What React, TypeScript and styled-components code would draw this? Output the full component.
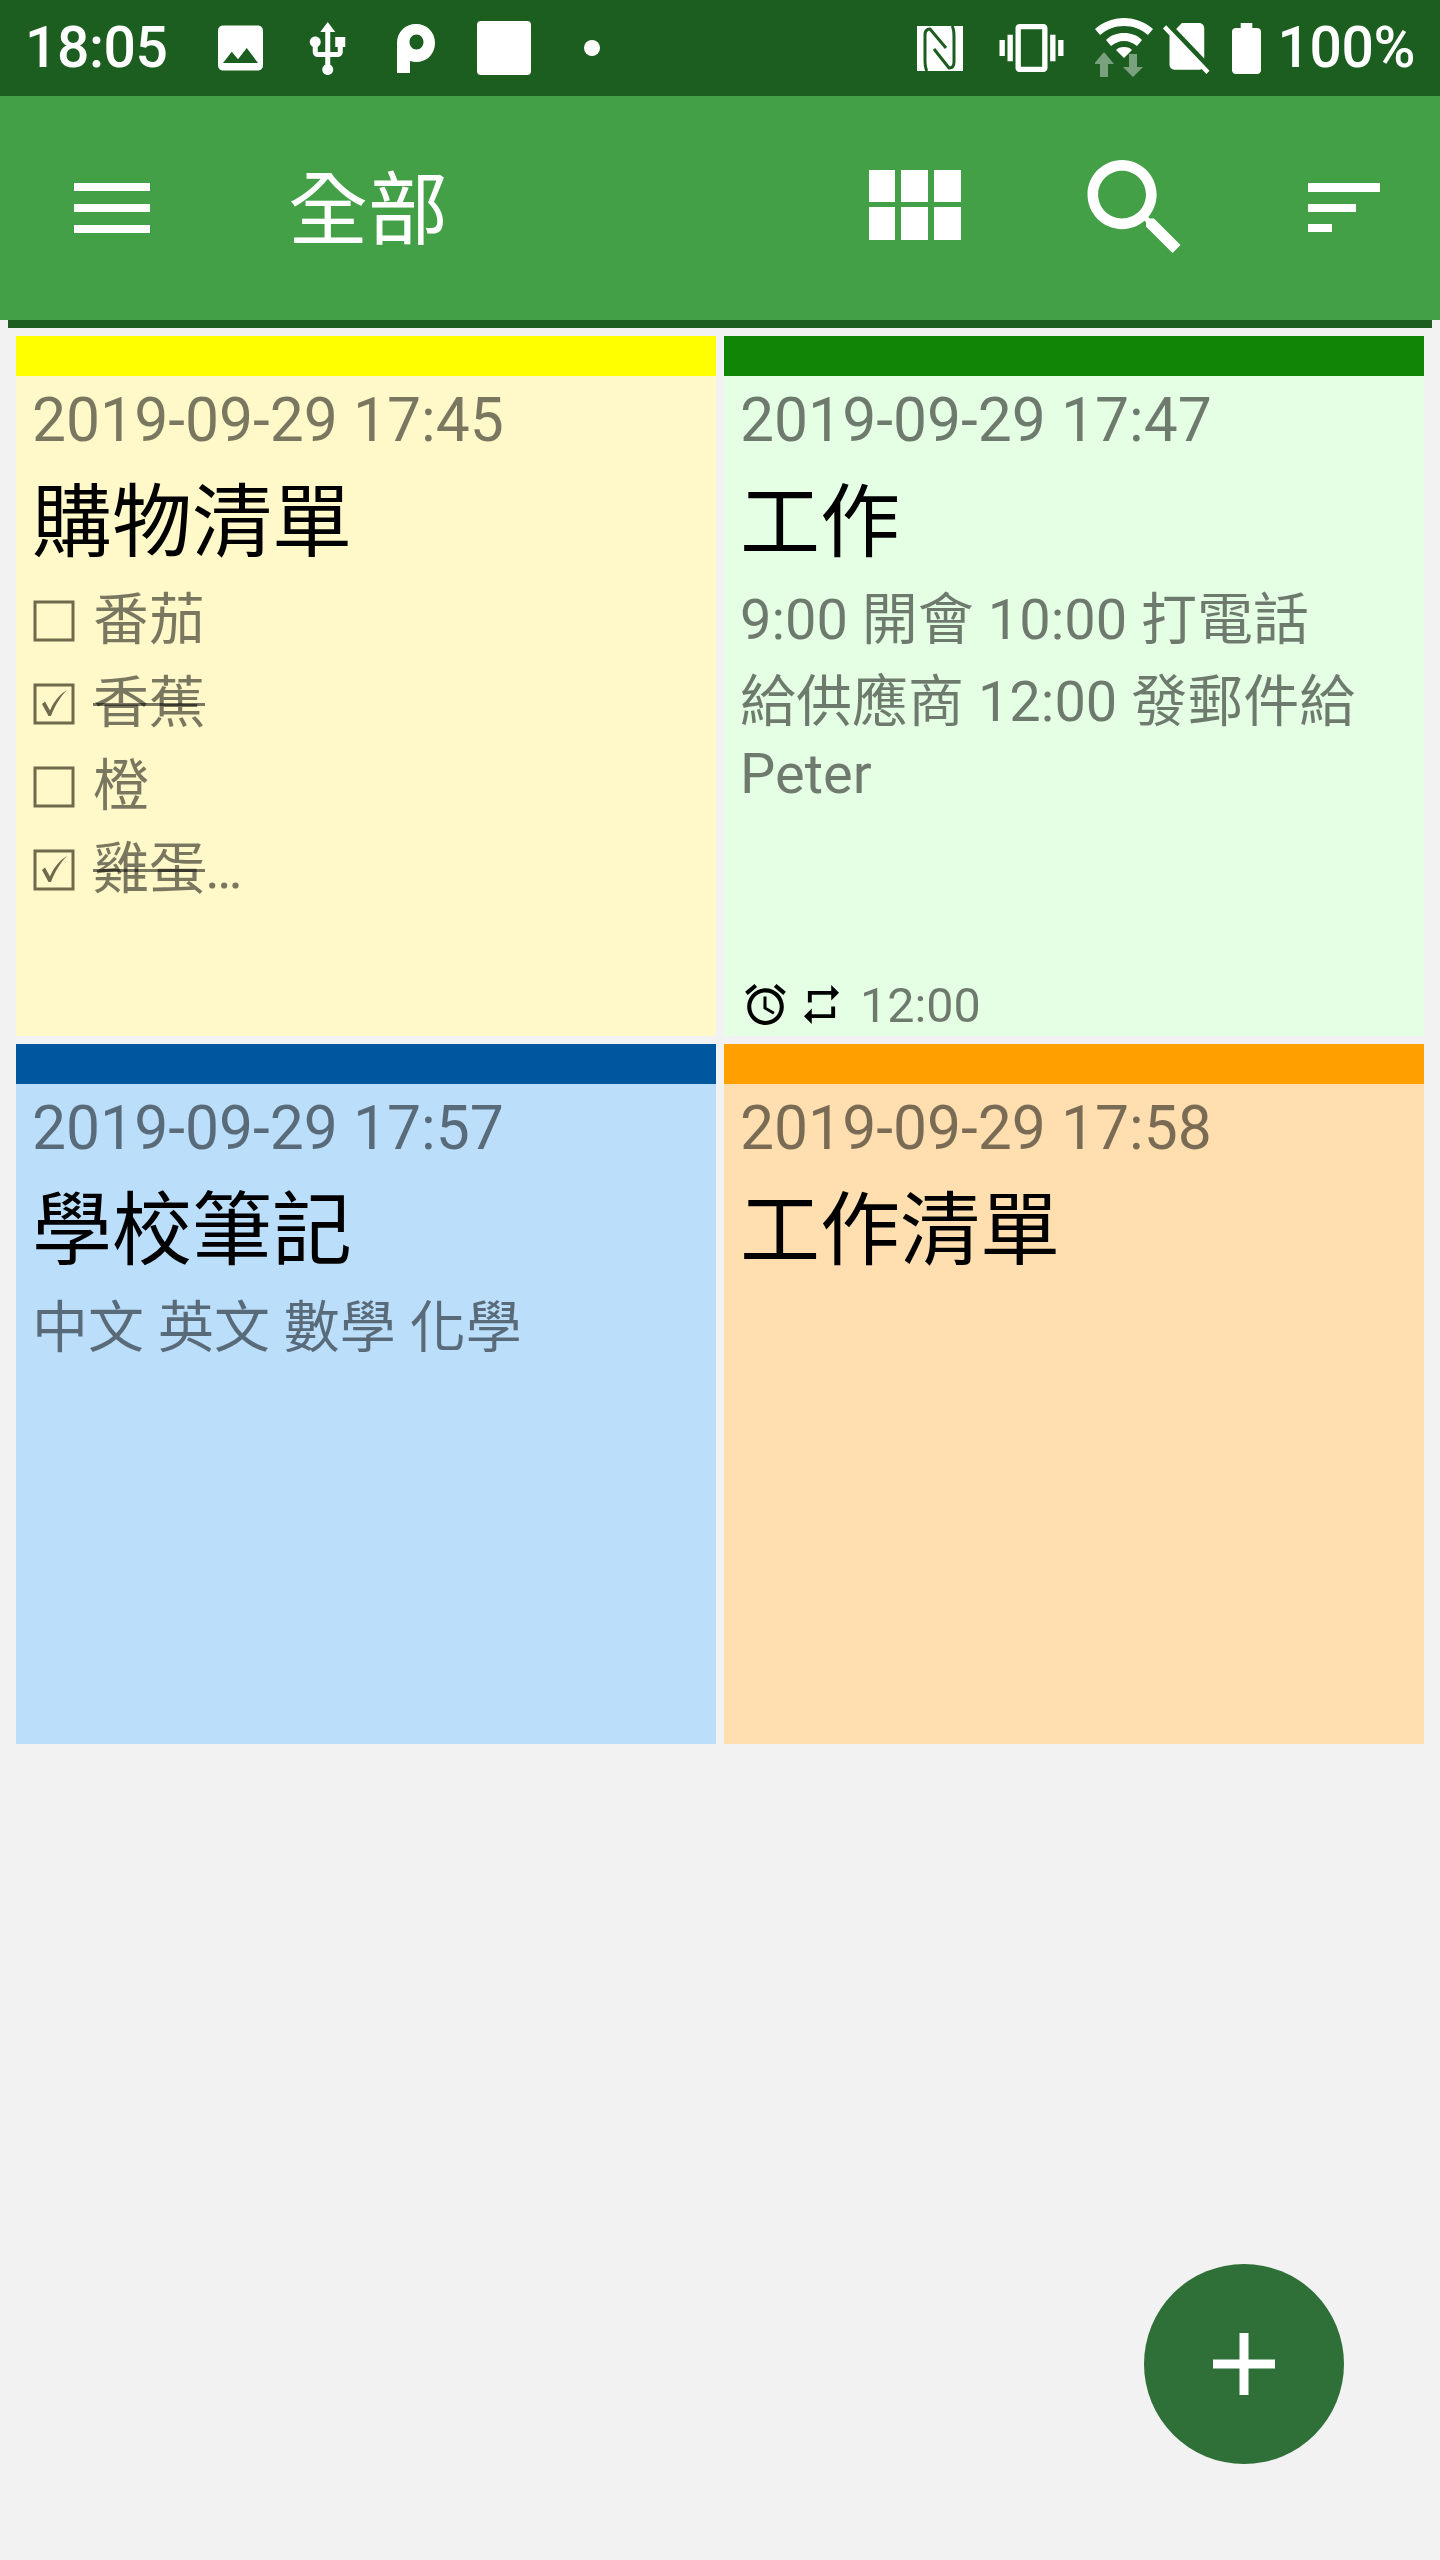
import { ReactNode } from "react";
import styled, { createGlobalStyle } from "styled-components";

const GlobalStyle = createGlobalStyle`
  html, body {
    margin: 0;
    padding: 0;
    background: #f2f2f2;
  }
  body {
    font-family: Roboto, "Noto Sans CJK TC", sans-serif;
  }
`;

const Screen = styled.div`
  position: relative;
  width: 1440px;
  height: 2560px;
  overflow: hidden;
  background: #f2f2f2;
`;

const StatusBar = styled.div`
  display: flex;
  align-items: center;
  height: 96px;
  padding: 0 25px;
  box-sizing: border-box;
  background: #1b5e20;
  color: #fff;
`;

const StatusText = styled.span`
  font-size: 57px;
  font-weight: 500;
  line-height: 96px;
  letter-spacing: -0.4px;
`;

const StatusSpacer = styled.div`
  flex: 1;
`;

const StatusIcon = styled.svg<{ $left: number }>`
  display: block;
  flex: none;
  margin-left: ${(p) => p.$left}px;
  fill: #fff;
`;

const StatusBlank = styled.div`
  flex: none;
  width: 54px;
  height: 54px;
  margin-left: 42px;
  border-radius: 4px;
  background: #fff;
`;

const StatusDot = styled.div`
  flex: none;
  width: 16px;
  height: 16px;
  margin-left: 53px;
  border-radius: 50%;
  background: #fff;
`;

const Battery = styled(StatusText)`
  margin-left: 16px;
`;

const Toolbar = styled.header`
  display: flex;
  align-items: center;
  height: 224px;
  padding: 0 60px 0 74px;
  box-sizing: border-box;
  background: #43a047;
`;

const ToolbarTitle = styled.h1`
  flex: 1;
  margin: 6px 0 0 138px;
  font-size: 80px;
  font-weight: 400;
  line-height: 218px;
  color: #fff;
`;

const ToolbarIcon = styled.svg<{ $left?: number; $lift?: number }>`
  display: block;
  flex: none;
  margin-left: ${(p) => p.$left ?? 0}px;
  margin-bottom: ${(p) => p.$lift ?? 0}px;
  fill: #fff;
`;

const ToolbarEdge = styled.div`
  height: 8px;
  margin: 0 8px;
  background: #1b5e20;
`;

const Grid = styled.main`
  display: grid;
  grid-template-columns: 700px 700px;
  grid-auto-rows: 700px;
  gap: 8px;
  padding: 8px 16px 0;
`;

const Card = styled.article<{ $bg: string }>`
  display: flex;
  flex-direction: column;
  background: ${(p) => p.$bg};
`;

const ColorBar = styled.div<{ $color: string }>`
  flex: none;
  height: 40px;
  background: ${(p) => p.$color};
`;

const CardBody = styled.div`
  flex: 1;
  display: flex;
  flex-direction: column;
  padding: 0 16px;
  color: rgba(0, 0, 0, 0.52);
`;

const DateLine = styled.div`
  margin-top: 2px;
  font-size: 60.6px;
  line-height: 86px;
  white-space: nowrap;
`;

const Title = styled.h2`
  margin: 4px 0 0;
  font-size: 80px;
  font-weight: 400;
  line-height: 110px;
  color: #000;
`;

const NoteLine = styled.div<{ $h: number }>`
  font-size: 56px;
  line-height: ${(p) => p.$h}px;
  white-space: nowrap;
`;

const FirstBlock = styled.div`
  margin-top: 1px;
`;

const CheckRow = styled.div`
  display: flex;
  align-items: center;
  gap: 18px;
  height: 83px;
  font-size: 56px;
  line-height: 83px;
`;

const Struck = styled.span`
  text-decoration: line-through;
  text-decoration-thickness: 3px;
`;

const CheckBox = styled.svg`
  display: block;
  flex: none;
  margin-left: 1px;
  fill: none;
  stroke: #6f6a4c;
`;

const ReminderRow = styled.div`
  display: flex;
  align-items: center;
  margin-top: auto;
  height: 64px;
`;

const ReminderIcon = styled.svg<{ $left: number }>`
  display: block;
  flex: none;
  margin-left: ${(p) => p.$left}px;
  fill: #000;
`;

const ReminderTime = styled.span`
  margin-left: 21px;
  padding-top: 3px;
  font-size: 48.5px;
  line-height: 64px;
`;

const Fab = styled.button`
  position: absolute;
  right: 96px;
  bottom: 96px;
  display: flex;
  align-items: center;
  justify-content: center;
  width: 200px;
  height: 200px;
  padding: 0;
  border: 0;
  border-radius: 50%;
  background: #2f7038;
`;

const FabPlus = styled.svg`
  display: block;
  fill: #fff;
`;

function Box({ checked }: { checked?: boolean }) {
  return (
    <CheckBox width="42" height="42" viewBox="0 0 42 42">
      <rect x="2" y="2" width="38" height="38" strokeWidth="3" />
      {checked && <path d="M9 21l3-2.5 5 9C21 18 27 11 34 7c-6 6-12 15-16 26h-2.5z" fill="#6f6a4c" stroke="none" />}
    </CheckBox>
  );
}

function CheckItem({ checked, children }: { checked?: boolean; children: ReactNode }) {
  return (
    <CheckRow>
      <Box checked={checked} />
      <span>{children}</span>
    </CheckRow>
  );
}

function App() {
  return (
    <Screen>
      <GlobalStyle />
      <StatusBar>
        <StatusText>18:05</StatusText>
        <StatusIcon $left={50} width="45" height="46" viewBox="3 3 18 18">
          <path d="M21 19V5c0-1.1-.9-2-2-2H5c-1.1 0-2 .9-2 2v14c0 1.1.9 2 2 2h14c1.1 0 2-.9 2-2zM8.5 13.5l2.5 3.01L14.5 12l4.5 6H5l3.5-4.5z" />
        </StatusIcon>
        <StatusIcon $left={46} width="37" height="53" viewBox="4.8 1 14.2 21.2">
          <path d="M15 7v4h1v2h-3V5h2l-3-4-3 4h2v8H8v-2.07c.7-.37 1.2-1.08 1.2-1.93 0-1.21-.99-2.2-2.2-2.2-1.21 0-2.2.99-2.2 2.2 0 .85.5 1.56 1.2 1.93V13c0 1.11.89 2 2 2h3v3.05c-.71.37-1.2 1.1-1.2 1.95 0 1.22.99 2.2 2.2 2.2 1.21 0 2.2-.98 2.2-2.2 0-.85-.49-1.58-1.2-1.95V15h3c1.11 0 2-.89 2-2v-2h1V7h-4z" />
        </StatusIcon>
        <StatusIcon $left={51} width="38" height="49" viewBox="0 0 38 49">
          <path
            fillRule="evenodd"
            d="M0 49V19C0 8 8 0 19 0s19 8 19 19-8 19-19 19c-2 0-4-.3-6-1v12zM19.500 10.500c-4 0-7 3.500-7 7.500s3 7.500 7 7.500 7-3.500 7-7.500-3-7.500-7-7.500z"
          />
        </StatusIcon>
        <StatusBlank />
        <StatusDot />
        <StatusSpacer />
        <StatusIcon width="46" height="45" viewBox="0 0 46 45">
          <path d="M0 0h46v45H0z" />
          <g fill="none" stroke="#1b5e20" strokeWidth="3">
            <path d="M10 45C8 42 8 38 8 34V9c0-4 2-6 5-6l16 19" />
            <path d="M35 0c2 3 2 7 2 11v25c0 4-2 6-5 6L17 23" />
          </g>
        </StatusIcon>
        <StatusIcon $left={36} width="65" height="48" viewBox="0 3 24 18">
          <path d="M0 15h2V9H0v6zm3 2h2V7H3v10zm19-8v6h2V9h-2zm-3 8h2V7h-2v10zM16.500 3h-9C6.670 3 6 3.670 6 4.500v15c0 .83.670 1.500 1.500 1.500h9c.83 0 1.500-.67 1.500-1.500v-15c0-.83-.67-1.500-1.500-1.500zM16 19H8V5h8v14z" />
        </StatusIcon>
        <StatusIcon $left={31} width="58" height="60" viewBox="0 0 58 60">
          <path d="M29 0C18 0 8 4 0 11l5 6c7-6 15-9 24-9s17 3 24 9l5-6C50 4 40 0 29 0z" />
          <path d="M29 15c-7 0-13 2-18 7l5 6c4-3 8-5 13-5s9 2 13 5l5-6c-5-5-11-7-18-7z" />
          <path d="M29 29c-4 0-6 1-8 3l8 8 8-8c-2-2-4-3-8-3z" />
          <path opacity=".42" d="M10 35L0 47h6v13h8V47h6zM35 37h8v13h6L39 60 29 50h6z" transform="translate(-1 -1)" />
        </StatusIcon>
        <StatusIcon $left={10} width="49" height="51" viewBox="2.380 3 19.740 19.620" preserveAspectRatio="none">
          <path d="M18.990 5c0-1.100-.89-2-1.990-2h-7L7.660 5.340 19 16.680 18.990 5zM3.650 3.880L2.380 5.150 5 7.770V19c0 1.100.9 2 2 2h10.010c.35 0 .67-.1.96-.26l1.880 1.880 1.270-1.270L3.650 3.880z" />
        </StatusIcon>
        <StatusIcon $left={20} width="29" height="51" viewBox="7 2 10 20" preserveAspectRatio="none">
          <path d="M15.670 4H14V2h-4v2H8.330C7.600 4 7 4.600 7 5.330v15.330C7 21.400 7.600 22 8.330 22h7.330c.74 0 1.340-.6 1.340-1.330V5.330C17 4.600 16.400 4 15.670 4z" />
        </StatusIcon>
        <Battery>100%</Battery>
      </StatusBar>

      <Toolbar>
        <ToolbarIcon width="76" height="50" viewBox="0 0 76 50">
          <path d="M0 0h76v8H0zM0 21h76v8H0zM0 42h76v8H0z" />
        </ToolbarIcon>
        <ToolbarTitle>全部</ToolbarTitle>
        <ToolbarIcon $lift={6} width="92" height="70" viewBox="0 0 92 70">
          <path d="M0 0h26v32H0zM32 0h27v32H32zM65 0h27v32H65zM0 37h26v33H0zM32 37h27v33H32zM65 37h27v33H65z" />
        </ToolbarIcon>
        <ToolbarIcon $left={126} $lift={4} width="94" height="93" viewBox="3 3 17.490 17.490">
          <path d="M15.500 14h-.79l-.28-.27C15.410 12.590 16 11.110 16 9.500 16 5.910 13.090 3 9.500 3S3 5.910 3 9.500 5.910 16 9.500 16c1.610 0 3.090-.59 4.230-1.570l.27.28v.79l5 4.990L20.490 19l-4.990-5zm-6 0C7.010 14 5 11.990 5 9.500S7.010 5 9.500 5 14 7.010 14 9.500 11.990 14 9.500 14z" />
        </ToolbarIcon>
        <ToolbarIcon $left={127} $lift={2} width="72" height="49" viewBox="0 0 72 49">
          <path d="M0 0h72v9H0zM0 21h48v8H0zM0 41h24v8H0z" />
        </ToolbarIcon>
      </Toolbar>
      <ToolbarEdge />

      <Grid>
        <Card $bg="#fff8c8">
          <ColorBar $color="#ffff00" />
          <CardBody>
            <DateLine>2019-09-29 17:45</DateLine>
            <Title>購物清單</Title>
            <FirstBlock>
              <CheckItem>番茄</CheckItem>
              <CheckItem checked>
                <Struck>香蕉</Struck>
              </CheckItem>
              <CheckItem>橙</CheckItem>
              <CheckItem checked>
                <Struck>雞蛋</Struck>…
              </CheckItem>
            </FirstBlock>
          </CardBody>
        </Card>

        <Card $bg="#e5ffe5">
          <ColorBar $color="#118505" />
          <CardBody>
            <DateLine>2019-09-29 17:47</DateLine>
            <Title>工作</Title>
            <FirstBlock>
              <NoteLine $h={83}>9:00 開會 10:00 打電話</NoteLine>
              <NoteLine $h={81}>給供應商 12:00 發郵件給</NoteLine>
              <NoteLine $h={62}>Peter</NoteLine>
            </FirstBlock>
            <ReminderRow>
              <ReminderIcon $left={4} width="43" height="41" viewBox="2 1.860 20 20.140">
                <path d="M22 5.720l-4.600-3.860-1.290 1.530 4.600 3.860L22 5.720zM7.880 3.390L6.600 1.860 2 5.710l1.290 1.530 4.590-3.850zM12.500 8H11v6l4.750 2.850.75-1.230-4-2.370V8zM12 4c-4.970 0-9 4.030-9 9s4.030 9 9 9c4.970 0 9-4.030 9-9s-4.030-9-9-9zm0 16c-3.870 0-7-3.130-7-7s3.130-7 7-7 7 3.130 7 7-3.130 7-7 7z" />
              </ReminderIcon>
              <ReminderIcon $left={17} width="35" height="39" viewBox="3 2 18 20">
                <path d="M7 7h10v3l4-4-4-4v3H5v6h2V7zm10 10H7v-3l-4 4 4 4v-3h12v-6h-2v4z" />
              </ReminderIcon>
              <ReminderTime>12:00</ReminderTime>
            </ReminderRow>
          </CardBody>
        </Card>

        <Card $bg="#bbdefb">
          <ColorBar $color="#00579f" />
          <CardBody>
            <DateLine>2019-09-29 17:57</DateLine>
            <Title>學校筆記</Title>
            <FirstBlock>
              <NoteLine $h={83}>中文 英文 數學 化學</NoteLine>
            </FirstBlock>
          </CardBody>
        </Card>

        <Card $bg="#ffdfb0">
          <ColorBar $color="#ff9f00" />
          <CardBody>
            <DateLine>2019-09-29 17:58</DateLine>
            <Title>工作清單</Title>
          </CardBody>
        </Card>
      </Grid>

      <Fab aria-label="add">
        <FabPlus width="62" height="62" viewBox="0 0 62 62">
          <path d="M26.500 0h9v26.500H62v9H35.500V62h-9V35.500H0v-9h26.500z" />
        </FabPlus>
      </Fab>
    </Screen>
  );
}

export default App;
